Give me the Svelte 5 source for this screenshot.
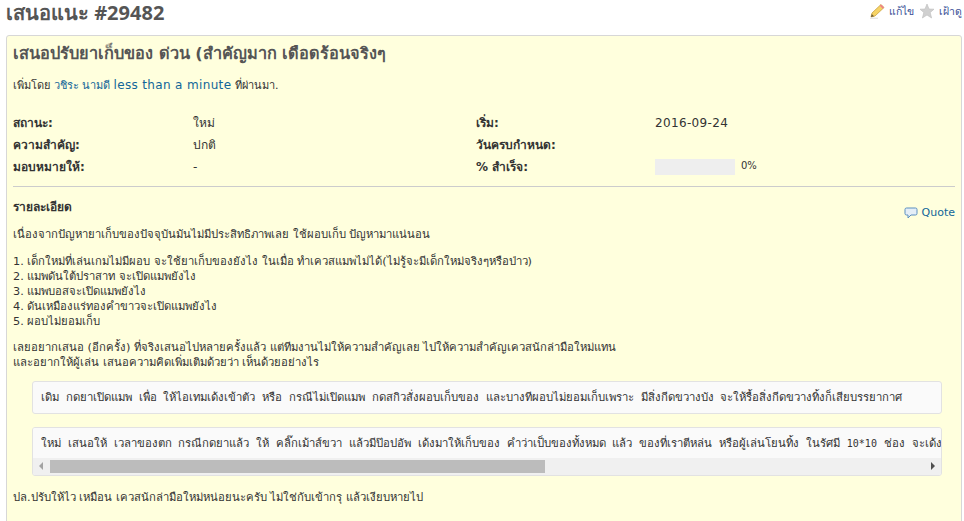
<script>
  const details = [
    "1. เด็กใหม่ที่เล่นเกมไม่มีผอบ จะใช้ยาเก็บของยังไง ในเมื่อ ทำเควสแมพไม่ได้(ไม่รู้จะมีเด็กใหม่จริงๆหรือป่าว)",
    "2. แมพดันใต้ปราสาท จะเปิดแมพยังไง",
    "3. แมพบอสจะเปิดแมพยังไง",
    "4. ดันเหมืองแร่ทองคำขาวจะเปิดแมพยังไง",
    "5. ผอบไม่ยอมเก็บ"
  ];
</script>

<div class="page">
  <div class="contextual">
    <a href="#edit" class="action">
      <svg width="16" height="16" viewBox="0 0 16 16">
        <path d="M2 14 L3 10 L12 1.5 L15 4.5 L6 13 Z" fill="#f6d365" stroke="#c9a23f" stroke-width="0.8" />
        <path d="M12 1.5 L15 4.5 L13.8 5.7 L10.8 2.7 Z" fill="#ee7f8c" />
        <path d="M2 14 L2.8 11 L5 13.2 Z" fill="#6b5a3a" />
        <path d="M1 15.2 H9" stroke="#ddd" stroke-width="1" />
      </svg>
      แก้ไข
    </a>
    <a href="#watch" class="action">
      <svg width="16" height="16" viewBox="0 0 16 16">
        <path d="M8 1 L10 6 L15 6.2 L11.2 9.5 L12.6 15 L8 12 L3.4 15 L4.8 9.5 L1 6.2 L6 6 Z" fill="#d0d0d0" stroke="#bcbcbc" stroke-width="0.6" />
      </svg>
      เฝ้าดู
    </a>
  </div>

  <h2>เสนอแนะ #29482</h2>

  <div class="issue">
    <h3>เสนอปรับยาเก็บของ ด่วน (สำคัญมาก เดือดร้อนจริงๆ</h3>
    <p class="author">เพิ่มโดย <a href="#user">วชิระ นามดี</a> <a href="#time" class="latin">less than a minute</a> ที่ผ่านมา.</p>

    <div class="attributes">
      <div class="label">สถานะ:</div>
      <div>ใหม่</div>
      <div class="label">เริ่ม:</div>
      <div class="latin">2016-09-24</div>

      <div class="label">ความสำคัญ:</div>
      <div>ปกติ</div>
      <div class="label">วันครบกำหนด:</div>
      <div></div>

      <div class="label">มอบหมายให้:</div>
      <div>-</div>
      <div class="label">% สำเร็จ:</div>
      <div class="progress-cell">
        <span class="progress"></span>
        <span class="percent">0%</span>
      </div>
    </div>

    <hr />

    <div class="description">
      <a href="#quote" class="quote">
        <svg width="14" height="14" viewBox="0 0 14 14">
          <path d="M2.5 2 H11.5 Q13 2 13 3.5 V7.5 Q13 9 11.5 9 H7 L4 12 V9 H2.5 Q1 9 1 7.5 V3.5 Q1 2 2.5 2 Z" fill="#e4eef7" stroke="#5b8fc0" stroke-width="1" />
        </svg>
        Quote
      </a>
      <p class="heading">รายละเอียด</p>
      <p class="intro">เนื่องจากปัญหายาเก็บของปัจจุบันมันไม่มีประสิทธิภาพเลย ใช้ผอบเก็บ ปัญหามาแน่นอน</p>
      <p>
        {#each details as line}
          {line}<br />
        {/each}
      </p>
      <p>เลยอยากเสนอ (อีกครั้ง) ที่จริงเสนอไปหลายครั้งแล้ว แต่ทีมงานไม่ให้ความสำคัญเลย ไปให้ความสำคัญเควสนักล่ามือใหม่แทน<br />และอยากให้ผู้เล่น เสนอความคิดเพิ่มเติมด้วยว่า เห็นด้วยอย่างไร</p>

      <pre>เดิม กดยาเปิดแมพ เพื่อ ให้ไอเทมเด้งเข้าตัว หรือ กรณีไม่เปิดแมพ กดสกิวสั่งผอบเก็บของ และบางทีผอบไม่ยอมเก็บเพราะ มีสิ่งกีดขวางบัง จะให้รื้อสิ่งกีดขวางทิ้งก็เสียบรรยากาศ</pre>

      <div class="pre-scroll">
        <pre class="inner">ใหม่ เสนอให้ เวลาของตก กรณีกดยาแล้ว ให้ คลิ๊กเม้าส์ขวา แล้วมีป๊อปอัพ เด้งมาให้เก็บของ คำว่าเป็บของทั้งหมด แล้ว ของที่เราตีหล่น หรือผู้เล่นโยนทิ้ง ในรัศมี <span class="num">10*10</span> ช่อง จะเด้งเข้าตัว</pre>
        <div class="scrollbar">
          <span class="arrow left"></span>
          <span class="track"><span class="thumb"></span></span>
          <span class="arrow right"></span>
        </div>
      </div>

      <p class="last">ปล.ปรับให้ไว เหมือน เควสนักล่ามือใหม่หน่อยนะครับ ไม่ใช่กับเข้ากรุ แล้วเงียบหายไป</p>
    </div>
  </div>
</div>

<style>
  :global(html), :global(body) {
    margin: 0;
    height: 521px;
    overflow: hidden;
    background: #fff;
  }

  .page {
    position: relative;
    padding: 0 2px 0 6px;
    font-family: "DejaVu Sans", "Noto Sans", sans-serif;
    font-size: 12px;
    line-height: 15px;
    color: #333;
  }

  a {
    color: #169;
    text-decoration: none;
  }

  h2 {
    margin: 0;
    padding: 1px 0 0;
    height: 33px;
    box-sizing: border-box;
    font-family: "Noto Sans", "DejaVu Sans", sans-serif;
    font-size: 20px;
    line-height: 24px;
    font-weight: bold;
    color: #555;
  }

  .contextual {
    float: right;
    display: flex;
    gap: 5px;
    padding-top: 3px;
    font-size: 10.5px;
  }

  .action {
    display: flex;
    align-items: center;
    gap: 4px;
    color: #3a4f96;
  }

  .issue {
    background: #ffd;
    border: 1px solid #d7d7d7;
    border-radius: 3px;
    padding: 6px;
    height: 600px;
    margin-top: 2px;
  }

  h3 {
    margin: 2px 0 14px;
    font-size: 16.3px;
    line-height: 20px;
    color: #555;
    font-weight: bold;
  }

  .author {
    margin: 0 0 19px;
    font-size: 11px;
  }

  .latin {
    font-size: 12px;
    letter-spacing: 0.35px;
  }

  .attributes {
    display: grid;
    grid-template-columns: 180px 283px 179px 1fr;
    grid-auto-rows: 22px;
    align-items: center;
  }

  .label {
    font-weight: bold;
  }

  .progress-cell {
    display: flex;
    align-items: center;
    gap: 6px;
  }

  .progress {
    width: 80px;
    height: 16px;
    background: #eee;
  }

  .percent {
    font-size: 10px;
    position: relative;
    top: -2px;
  }

  hr {
    margin: 8px 0 13px;
    border: 0;
    height: 1px;
    background: #ccc;
  }

  .description p {
    margin: 0 0 11px;
    font-size: 11.3px;
  }

  .description .heading {
    font-size: 12px;
    font-weight: bold;
    margin-bottom: 12px;
  }

  .description .intro {
    margin-bottom: 12px;
  }

  .quote {
    float: right;
    display: flex;
    align-items: center;
    gap: 4px;
    margin-top: 5px;
    font-size: 11px;
  }

  pre {
    margin: 0 13px 13px 19px;
    padding: 8px;
    border: 1px solid #e2e2e2;
    border-radius: 3px;
    background: #fafafa;
    overflow: hidden;
    white-space: pre;
    font-family: "DejaVu Sans Mono", monospace;
    font-size: 11.35px;
    line-height: 15px;
  }

  .num {
    font-size: 10px;
  }

  .pre-scroll {
    margin: 0 13px 13px 19px;
    border: 1px solid #e2e2e2;
    border-radius: 3px;
    background: #fafafa;
    overflow: hidden;
  }

  pre.inner {
    margin: 0;
    border: 0;
    border-radius: 0;
    padding-bottom: 7px;
  }

  .description .last {
    margin-top: 14px;
  }

  .scrollbar {
    display: flex;
    align-items: center;
    height: 17px;
    background: #f0f0f0;
  }

  .arrow {
    width: 17px;
    height: 17px;
    flex: none;
    position: relative;
  }

  .arrow::after {
    content: "";
    position: absolute;
    top: 4px;
    border: 4px solid transparent;
  }

  .arrow.left::after {
    left: 2px;
    border-right-color: #a3a3a3;
  }

  .arrow.right::after {
    left: 7px;
    border-left-color: #505050;
  }

  .track {
    flex: 1;
    height: 13px;
  }

  .thumb {
    display: block;
    width: 495px;
    height: 100%;
    background: #bcbcbc;
  }
</style>
